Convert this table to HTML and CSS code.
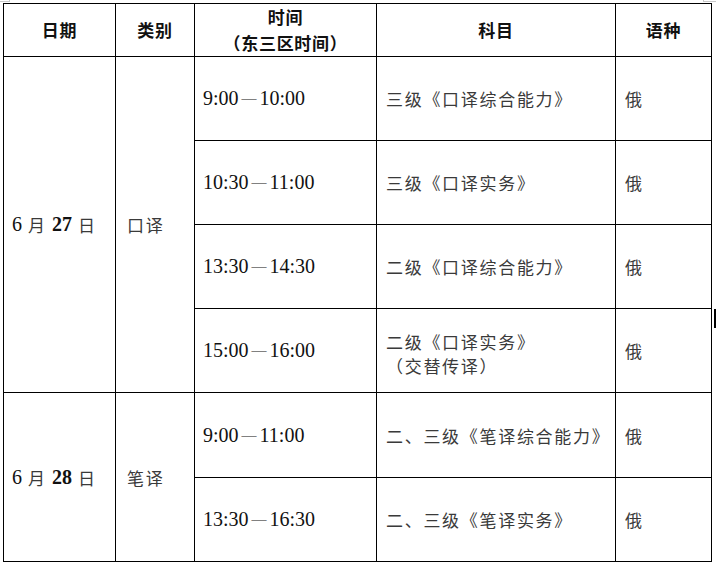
FILE: index.html
```html
<!DOCTYPE html>
<html lang="zh-CN">
<head>
<meta charset="utf-8">
<title>考试时间表</title>
<link rel="stylesheet" href="styles.css">
</head>
<body>
<div class="page">
  <span class="mark mark-tl"></span>
  <span class="mark mark-tr"></span>
  <div class="sheet">
    <div class="cell head">日期</div>
    <div class="cell head">类别</div>
    <div class="cell head"><span>时间<br>（东三区时间）</span></div>
    <div class="cell head">科目</div>
    <div class="cell head">语种</div>

    <div class="cell date span4"><span class="num">6</span><span class="cjk">月</span><span class="num b">27</span><span class="cjk">日</span></div>
    <div class="cell cat span4">口译</div>
    <div class="cell time">9:00<span class="dash">—</span>10:00</div>
    <div class="cell subj">三级《口译综合能力》</div>
    <div class="cell lang">俄</div>

    <div class="cell time">10:30<span class="dash">—</span>11:00</div>
    <div class="cell subj">三级《口译实务》</div>
    <div class="cell lang">俄</div>

    <div class="cell time">13:30<span class="dash">—</span>14:30</div>
    <div class="cell subj">二级《口译综合能力》</div>
    <div class="cell lang">俄</div>

    <div class="cell time">15:00<span class="dash">—</span>16:00</div>
    <div class="cell subj two"><span>二级《口译实务》<br>（交替传译）</span></div>
    <div class="cell lang">俄</div>

    <div class="cell date span2"><span class="num">6</span><span class="cjk">月</span><span class="num b">28</span><span class="cjk">日</span></div>
    <div class="cell cat span2">笔译</div>
    <div class="cell time">9:00<span class="dash">—</span>11:00</div>
    <div class="cell subj">二、三级《笔译综合能力》</div>
    <div class="cell lang">俄</div>

    <div class="cell time">13:30<span class="dash">—</span>16:30</div>
    <div class="cell subj">二、三级《笔译实务》</div>
    <div class="cell lang">俄</div>
  </div>
  <span class="caret"></span>
</div>
</body>
</html>
```

FILE: styles.css
```css
html, body {
  margin: 0;
  padding: 0;
  background: #ffffff;
}

.page {
  position: relative;
  width: 716px;
  height: 569px;
  padding: 3px 0 0 3px;
  box-sizing: border-box;
}

.sheet {
  display: grid;
  grid-template-columns: 112px 79px 182px 239px 96px;
  grid-template-rows: 53px 84px 84px 84px 84px 85px 84px;
  border-left: 1px solid #000;
  border-top: 1px solid #000;
  width: max-content;
  font-family: "Liberation Serif", "Noto Sans CJK SC", serif;
}

.cell {
  box-sizing: border-box;
  border-right: 1px solid #000;
  border-bottom: 1px solid #000;
  display: flex;
  align-items: center;
  padding-left: 8px;
  color: #3a3a3a;
  font-family: "Noto Sans CJK SC", sans-serif;
  font-size: 17px;
  letter-spacing: 1.7px;
  white-space: nowrap;
}

.head {
  justify-content: center;
  text-align: center;
  padding: 0;
  font-weight: 700;
  font-size: 17px;
  letter-spacing: 0.7px;
  line-height: 26px;
  color: #111;
}

.span4 { grid-row: span 4; }
.span2 { grid-row: span 2; }

.date {
  font-family: "Liberation Serif", serif;
  font-size: 20px;
  letter-spacing: 0;
  color: #111;
  padding-left: 8px;
}

.date .cjk {
  font-family: "Noto Sans CJK SC", sans-serif;
  font-size: 17px;
  color: #3a3a3a;
  margin: 0 7px 0 6px;
}

.num.b { font-weight: 700; }

.cat {
  padding-left: 11px;
}

.time {
  font-family: "Liberation Serif", serif;
  font-size: 20px;
  letter-spacing: 0;
  color: #111;
  padding-left: 8px;
}

.dash {
  font-size: 15px;
  margin: 0 3px;
  vertical-align: 2px;
}

.subj {
  padding-left: 9px;
}

.two {
  line-height: 24px;
  padding-top: 6px;
}

.lang {
  padding-left: 9px;
}

.mark {
  position: absolute;
  top: 0;
  width: 10px;
  height: 2px;
  border-color: #c8c8c8;
  border-style: solid;
  box-sizing: border-box;
}

.mark-tl {
  left: 0;
  border-width: 0 1px 1px 0;
}

.mark-tr {
  left: 703px;
  width: 13px;
  border-width: 0 0 1px 1px;
}

.caret {
  position: absolute;
  left: 714px;
  top: 309px;
  width: 2px;
  height: 19px;
  background: #000;
}
```
